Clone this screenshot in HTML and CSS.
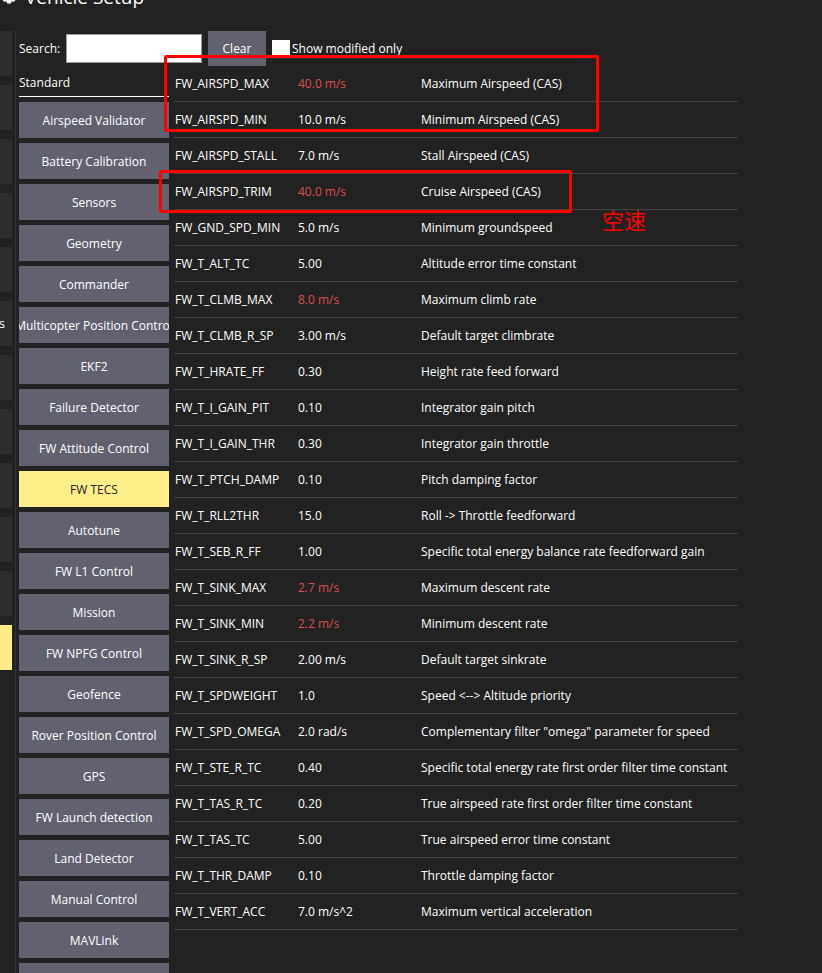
FILE: index.html
```html
<!DOCTYPE html>
<html lang="en">
<head>
<meta charset="utf-8">
<title>Vehicle Setup</title>
<link rel="stylesheet" href="styles.css">
</head>
<body>
<div class="title">
  <svg class="gear" width="18" height="18" viewBox="0 0 18 18"><path d="M7 0h4l.6 2.4 2-.9 2.2 2.2-.9 2L17.3 6.3v4l-2.4.6.9 2-2.2 2.2-2-.9-.6 2.4H7l-.6-2.4-2 .9-2.2-2.2.9-2L.7 10.3v-4l2.4-.6-.9-2 2.2-2.2 2 .9z" fill="#fff"/></svg>
  <span class="title-text">Vehicle Setup</span>
</div>
<div class="main">
  <div class="strip">
    <div class="tab"></div>
    <div class="tab"></div>
    <div class="tab"></div>
    <div class="tab"></div>
    <div class="tab"></div>
    <div class="tab"><span>Parameters</span></div>
    <div class="tab"></div>
    <div class="tab"></div>
    <div class="tab"></div>
    <div class="tab"></div>
    <div class="tab"></div>
    <div class="tab active"></div>
  </div>
  <div class="divider"></div>
  <div class="panel">
    <div class="toolbar">
      <span class="search-label">Search:</span>
      <div class="search-input"></div>
      <div class="clear-btn">Clear</div>
      <div class="checkbox"></div>
      <span class="check-label">Show modified only</span>
    </div>
    <div class="content">
      <div class="groups">
        <div class="group-header">Standard</div>
        <div class="group-btn"><span>Airspeed Validator</span></div>
        <div class="group-btn"><span>Battery Calibration</span></div>
        <div class="group-btn"><span>Sensors</span></div>
        <div class="group-btn"><span>Geometry</span></div>
        <div class="group-btn"><span>Commander</span></div>
        <div class="group-btn"><span>Multicopter Position Control</span></div>
        <div class="group-btn"><span>EKF2</span></div>
        <div class="group-btn"><span>Failure Detector</span></div>
        <div class="group-btn"><span>FW Attitude Control</span></div>
        <div class="group-btn selected"><span>FW TECS</span></div>
        <div class="group-btn"><span>Autotune</span></div>
        <div class="group-btn"><span>FW L1 Control</span></div>
        <div class="group-btn"><span>Mission</span></div>
        <div class="group-btn"><span>FW NPFG Control</span></div>
        <div class="group-btn"><span>Geofence</span></div>
        <div class="group-btn"><span>Rover Position Control</span></div>
        <div class="group-btn"><span>GPS</span></div>
        <div class="group-btn"><span>FW Launch detection</span></div>
        <div class="group-btn"><span>Land Detector</span></div>
        <div class="group-btn"><span>Manual Control</span></div>
        <div class="group-btn"><span>MAVLink</span></div>
        <div class="group-btn"><span>Mixer Output</span></div>
      </div>
      <div class="params">
        <div class="row"><span class="name">FW_AIRSPD_MAX</span><span class="val mod">40.0 m/s</span><span class="desc">Maximum Airspeed (CAS)</span></div>
        <div class="row"><span class="name">FW_AIRSPD_MIN</span><span class="val">10.0 m/s</span><span class="desc">Minimum Airspeed (CAS)</span></div>
        <div class="row"><span class="name">FW_AIRSPD_STALL</span><span class="val">7.0 m/s</span><span class="desc">Stall Airspeed (CAS)</span></div>
        <div class="row"><span class="name">FW_AIRSPD_TRIM</span><span class="val mod">40.0 m/s</span><span class="desc">Cruise Airspeed (CAS)</span></div>
        <div class="row"><span class="name">FW_GND_SPD_MIN</span><span class="val">5.0 m/s</span><span class="desc">Minimum groundspeed</span></div>
        <div class="row"><span class="name">FW_T_ALT_TC</span><span class="val">5.00</span><span class="desc">Altitude error time constant</span></div>
        <div class="row"><span class="name">FW_T_CLMB_MAX</span><span class="val mod">8.0 m/s</span><span class="desc">Maximum climb rate</span></div>
        <div class="row"><span class="name">FW_T_CLMB_R_SP</span><span class="val">3.00 m/s</span><span class="desc">Default target climbrate</span></div>
        <div class="row"><span class="name">FW_T_HRATE_FF</span><span class="val">0.30</span><span class="desc">Height rate feed forward</span></div>
        <div class="row"><span class="name">FW_T_I_GAIN_PIT</span><span class="val">0.10</span><span class="desc">Integrator gain pitch</span></div>
        <div class="row"><span class="name">FW_T_I_GAIN_THR</span><span class="val">0.30</span><span class="desc">Integrator gain throttle</span></div>
        <div class="row"><span class="name">FW_T_PTCH_DAMP</span><span class="val">0.10</span><span class="desc">Pitch damping factor</span></div>
        <div class="row"><span class="name">FW_T_RLL2THR</span><span class="val">15.0</span><span class="desc">Roll -&gt; Throttle feedforward</span></div>
        <div class="row"><span class="name">FW_T_SEB_R_FF</span><span class="val">1.00</span><span class="desc">Specific total energy balance rate feedforward gain</span></div>
        <div class="row"><span class="name">FW_T_SINK_MAX</span><span class="val mod">2.7 m/s</span><span class="desc">Maximum descent rate</span></div>
        <div class="row"><span class="name">FW_T_SINK_MIN</span><span class="val mod">2.2 m/s</span><span class="desc">Minimum descent rate</span></div>
        <div class="row"><span class="name">FW_T_SINK_R_SP</span><span class="val">2.00 m/s</span><span class="desc">Default target sinkrate</span></div>
        <div class="row"><span class="name">FW_T_SPDWEIGHT</span><span class="val">1.0</span><span class="desc">Speed &lt;--&gt; Altitude priority</span></div>
        <div class="row"><span class="name">FW_T_SPD_OMEGA</span><span class="val">2.0 rad/s</span><span class="desc">Complementary filter "omega" parameter for speed</span></div>
        <div class="row"><span class="name">FW_T_STE_R_TC</span><span class="val">0.40</span><span class="desc">Specific total energy rate first order filter time constant</span></div>
        <div class="row"><span class="name">FW_T_TAS_R_TC</span><span class="val">0.20</span><span class="desc">True airspeed rate first order filter time constant</span></div>
        <div class="row"><span class="name">FW_T_TAS_TC</span><span class="val">5.00</span><span class="desc">True airspeed error time constant</span></div>
        <div class="row"><span class="name">FW_T_THR_DAMP</span><span class="val">0.10</span><span class="desc">Throttle damping factor</span></div>
        <div class="row"><span class="name">FW_T_VERT_ACC</span><span class="val">7.0 m/s^2</span><span class="desc">Maximum vertical acceleration</span></div>
      </div>
    </div>
  </div>
</div>
<div class="mark mark-a"></div>
<div class="mark mark-b"></div>
<div class="note">空速</div>
</body>
</html>
```

FILE: styles.css
```css
html, body {
  margin: 0;
  padding: 0;
  background: #222222;
  color: #ffffff;
  font-family: "Open Sans", "Noto Sans", sans-serif;
  font-size: 12px;
  overflow: hidden;
  height: 973px;
}

.title {
  display: flex;
  align-items: flex-start;
  height: 31px;
  gap: 7px;
}
.gear { display: block; margin-top: -13px; flex-shrink: 0; }
.title-text {
  font-size: 19px;
  line-height: 24px;
  margin-top: -15px;
  color: #ffffff;
}

.main {
  display: flex;
  align-items: flex-start;
}

.strip {
  width: 12px;
  display: flex;
  flex-direction: column;
  gap: 9px;
}
.tab {
  height: 45px;
  background: #2e2e2e;
  display: flex;
  justify-content: flex-end;
  align-items: center;
  overflow: hidden;
  padding-right: 7px;
  margin-left: -100px;
  width: 112px;
  box-sizing: border-box;
  color: #ffffff;
  white-space: nowrap;
  font-size: 12.5px;
}
.tab.active { background: #ffee88; }

.divider {
  width: 1px;
  height: 942px;
  background: #333333;
  margin-left: 3px;
}

.panel {
  margin-left: 3px;
  display: flex;
  flex-direction: column;
}

.toolbar {
  display: flex;
  align-items: center;
  height: 35px;
}
.search-label { width: 47px; }
.search-input {
  width: 136px;
  height: 29px;
  box-sizing: border-box;
  background: #ffffff;
  border: 1px solid #9a9a9a;
  margin-right: 6px;
}
.clear-btn {
  width: 58px;
  height: 35px;
  background: #626170;
  display: flex;
  align-items: center;
  justify-content: center;
  margin-right: 6px;
}
.checkbox {
  width: 18px;
  height: 18px;
  background: #ffffff;
  margin-right: 2px;
}

.content {
  display: flex;
  gap: 5px;
}

.groups {
  width: 150px;
  display: flex;
  flex-direction: column;
  gap: 5px;
}
.group-header {
  height: 31px;
  border-bottom: 1px solid #ffffff;
  display: flex;
  align-items: center;
  padding-top: 3px;
  box-sizing: border-box;
}
.group-btn {
  height: 36px;
  background: #626170;
  display: flex;
  justify-content: center;
  align-items: center;
  overflow: hidden;
  white-space: nowrap;
  flex-shrink: 0;
}
.group-btn span { flex-shrink: 0; }
.group-btn.selected {
  background: #ffef8a;
  color: #222222;
}

.params {
  width: 564px;
  display: flex;
  flex-direction: column;
}
.row {
  height: 36px;
  box-sizing: border-box;
  border-bottom: 1px solid #444444;
  display: flex;
  align-items: center;
  padding-left: 1px;
  white-space: nowrap;
}
.name { width: 123px; flex-shrink: 0; }
.val { width: 123px; flex-shrink: 0; }
.mod { color: #d9504f; }

.mark {
  position: absolute;
  border: 3px solid #ff0000;
  border-radius: 2px;
  box-sizing: border-box;
}
.mark-a { left: 164px; top: 55px; width: 435px; height: 77px; }
.mark-b { left: 159px; top: 170px; width: 413px; height: 43px; }

.note {
  position: absolute;
  left: 602px;
  top: 204px;
  color: #ff0000;
  font-family: "Noto Sans CJK SC", sans-serif;
  font-size: 22px;
  line-height: 30px;
}
```
